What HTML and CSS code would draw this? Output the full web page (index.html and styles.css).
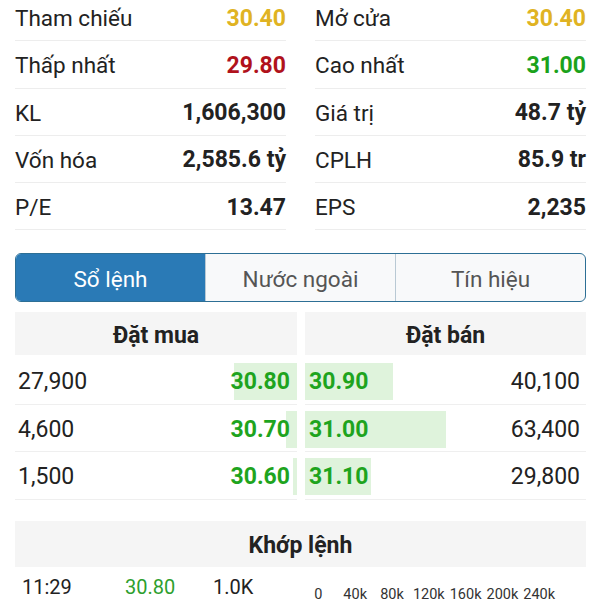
FILE: index.html
```html
<!DOCTYPE html>
<html lang="vi">
<head>
    <meta charset="UTF-8">
    <meta name="viewport" content="width=device-width, initial-scale=1.0">
    <title>Chi tiết cổ phiếu</title>
    <link rel="stylesheet" href="styles.css">
</head>
<body>

<div class="stats">
    <div class="stats-col">
        <div class="stat-row"><span>Tham chiếu</span><span class="stat-value ref">30.40</span></div>
        <div class="stat-row"><span>Thấp nhất</span><span class="stat-value down">29.80</span></div>
        <div class="stat-row"><span>KL</span><span class="stat-value">1,606,300</span></div>
        <div class="stat-row"><span>Vốn hóa</span><span class="stat-value">2,585.6 tỷ</span></div>
        <div class="stat-row"><span>P/E</span><span class="stat-value">13.47</span></div>
    </div>
    <div class="stats-col">
        <div class="stat-row"><span>Mở cửa</span><span class="stat-value ref">30.40</span></div>
        <div class="stat-row"><span>Cao nhất</span><span class="stat-value up">31.00</span></div>
        <div class="stat-row"><span>Giá trị</span><span class="stat-value">48.7 tỷ</span></div>
        <div class="stat-row"><span>CPLH</span><span class="stat-value">85.9 tr</span></div>
        <div class="stat-row"><span>EPS</span><span class="stat-value">2,235</span></div>
    </div>
</div>

<div class="tabs">
    <div class="tab active">Sổ lệnh</div>
    <div class="tab">Nước ngoài</div>
    <div class="tab">Tín hiệu</div>
</div>

<div class="book">
    <div class="book-side">
        <div class="book-head">Đặt mua</div>
        <div class="book-row buy">
            <div class="bar" style="width: 63px"></div>
            <span class="vol">27,900</span><span class="price">30.80</span>
        </div>
        <div class="book-row buy">
            <div class="bar" style="width: 11px"></div>
            <span class="vol">4,600</span><span class="price">30.70</span>
        </div>
        <div class="book-row buy">
            <div class="bar" style="width: 4px"></div>
            <span class="vol">1,500</span><span class="price">30.60</span>
        </div>
    </div>
    <div class="book-side">
        <div class="book-head">Đặt bán</div>
        <div class="book-row sell">
            <div class="bar" style="width: 88px"></div>
            <span class="price">30.90</span><span class="vol">40,100</span>
        </div>
        <div class="book-row sell">
            <div class="bar" style="width: 141px"></div>
            <span class="price">31.00</span><span class="vol">63,400</span>
        </div>
        <div class="book-row sell">
            <div class="bar" style="width: 66px"></div>
            <span class="price">31.10</span><span class="vol">29,800</span>
        </div>
    </div>
</div>

<div class="match-head">Khớp lệnh</div>
<div class="match-row">
    <span class="match-time">11:29</span>
    <span class="match-price">30.80</span>
    <span class="match-vol">1.0K</span>
    <div class="axis">
        <span>0</span><span>40k</span><span>80k</span><span>120k</span><span>160k</span><span>200k</span><span>240k</span>
    </div>
</div>

</body>
</html>
```

FILE: styles.css
```css
body {
    margin: 0;
    padding: 0;
    font-family: Roboto, "Noto Sans", Arial, sans-serif;
    color: #222;
    background: #fff;
    height: 100vh;
    overflow: hidden;
}

/* thông tin giá */
.stats {
    display: grid;
    grid-template-columns: 1fr 1fr;
    column-gap: 29px;
    padding: 0 14px 0 15px;
    margin-top: -6px;
}

.stat-row {
    display: flex;
    justify-content: space-between;
    align-items: center;
    height: 44.25px;
    padding-top: 2px;
    border-bottom: 1px solid #ededed;
    font-size: 22.5px;
}

.stat-value {
    font-weight: bold;
    font-size: 23px;
    color: #222;
}

.ref { color: #e0b322; }
.down { color: #b0121c; }
.up { color: #1ba21b; }

/* tabs */
.tabs {
    display: flex;
    margin: 23px 14px 0 15px;
    height: 46px;
    padding-top: 1px;
    border: 1.5px solid #2d6f95;
    border-radius: 6px;
    overflow: hidden;
    background: #f8f9fa;
}

.tab {
    flex: 1;
    display: flex;
    align-items: center;
    justify-content: center;
    margin-top: -1px;
    padding-top: 2px;
    font-size: 22.5px;
    color: #555;
    border-left: 1px solid #b9c9d4;
}

.tab.active {
    background: #2a7ab6;
    color: #fff;
    border-left: none;
}

/* sổ lệnh */
.book {
    display: grid;
    grid-template-columns: 282px 281px;
    column-gap: 8px;
    padding: 0 14px 0 15px;
    margin-top: 10px;
}

.book-head {
    height: 40px;
    padding-top: 3px;
    margin-bottom: 2px;
    background: #f5f5f5;
    display: flex;
    align-items: center;
    justify-content: center;
    font-size: 23px;
    font-weight: bold;
}

.book-row {
    position: relative;
    display: flex;
    justify-content: space-between;
    align-items: center;
    height: 44.5px;
    padding-top: 2px;
    border-bottom: 1px solid #efefef;
    font-size: 23px;
}

.book-row .bar {
    position: absolute;
    top: 6px;
    height: 37px;
    background: #dff3dc;
}

.book-row.buy .bar { right: 0; }
.book-row.sell .bar { left: 0; }

.book-row span {
    position: relative;
}

.book-row .price {
    font-weight: bold;
    color: #1ea41e;
}

.book-row.buy { padding-left: 3px; padding-right: 7px; }
.book-row.sell { padding-left: 4px; padding-right: 6px; }

/* khớp lệnh */
.match-head {
    margin: 21px 14px 0 15px;
    height: 43px;
    padding-top: 3px;
    background: #f5f5f5;
    display: flex;
    align-items: center;
    justify-content: center;
    font-size: 23px;
    font-weight: bold;
}

.match-row {
    display: flex;
    align-items: center;
    height: 36px;
    padding-top: 2px;
    padding-left: 22px;
    font-size: 20px;
}

.match-time { width: 103px; }
.match-price { width: 88px; color: #2e9f2e; }
.match-vol { width: 67px; }

.axis {
    display: flex;
    margin-left: 20px;
    padding-top: 15px;
    font-size: 14.5px;
    color: #333;
}

.axis span {
    width: 36.8px;
    text-align: center;
}
```
